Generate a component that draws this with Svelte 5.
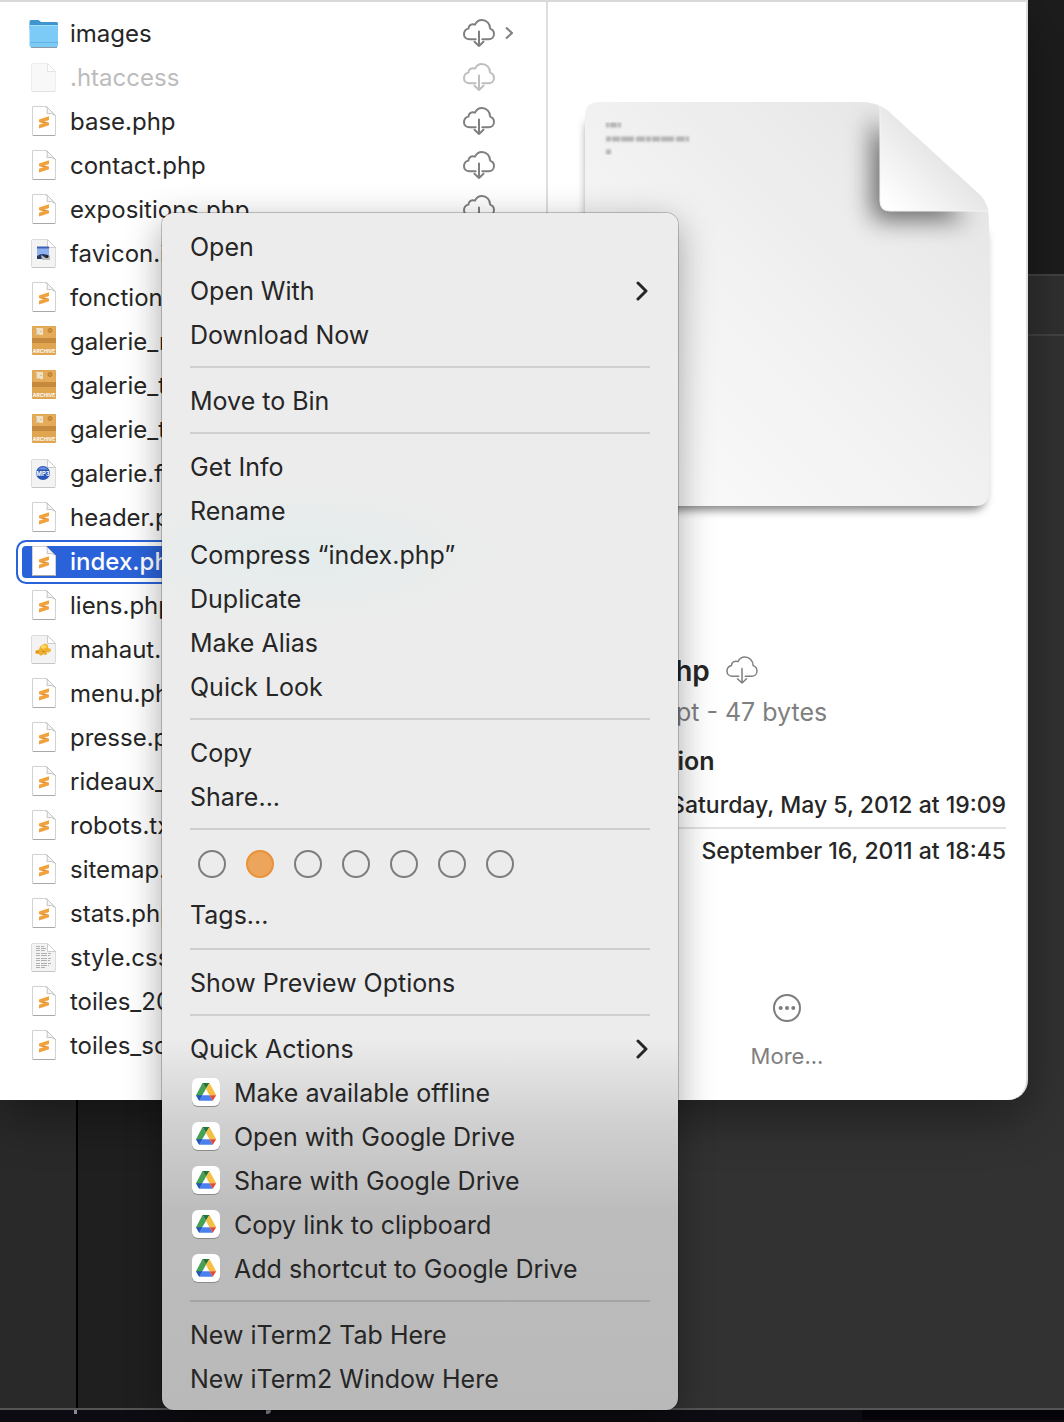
<script>
  const files = [
    { name: 'images', icon: 'folder', cloud: true, folder: true },
    { name: '.htaccess', icon: 'blank', cloud: true, dimmed: true },
    { name: 'base.php', icon: 'code', cloud: true },
    { name: 'contact.php', icon: 'code', cloud: true },
    { name: 'expositions.php', icon: 'code', cloud: true },
    { name: 'favicon.ico', icon: 'image' },
    { name: 'fonctions', icon: 'code' },
    { name: 'galerie_n', icon: 'archive' },
    { name: 'galerie_t', icon: 'archive' },
    { name: 'galerie_t', icon: 'archive' },
    { name: 'galerie.fl', icon: 'media' },
    { name: 'header.php', icon: 'code' },
    { name: 'index.php', icon: 'code' },
    { name: 'liens.php', icon: 'code' },
    { name: 'mahaut.', icon: 'duck' },
    { name: 'menu.php', icon: 'code' },
    { name: 'presse.php', icon: 'code' },
    { name: 'rideaux_', icon: 'code' },
    { name: 'robots.txt', icon: 'code' },
    { name: 'sitemap.', icon: 'code' },
    { name: 'stats.php', icon: 'code' },
    { name: 'style.css', icon: 'text' },
    { name: 'toiles_20', icon: 'code' },
    { name: 'toiles_so', icon: 'code' }
  ]

  const groups = [
    [{ label: 'Open' }, { label: 'Open With', sub: true }, { label: 'Download Now' }],
    [{ label: 'Move to Bin' }],
    [
      { label: 'Get Info' },
      { label: 'Rename' },
      { label: 'Compress “index.php”' },
      { label: 'Duplicate' },
      { label: 'Make Alias' },
      { label: 'Quick Look' }
    ],
    [{ label: 'Copy' }, { label: 'Share...' }],
    [{ tags: true }, { label: 'Tags...' }],
    [{ label: 'Show Preview Options' }],
    [
      { label: 'Quick Actions', sub: true },
      { label: 'Make available offline', drive: true },
      { label: 'Open with Google Drive', drive: true },
      { label: 'Share with Google Drive', drive: true },
      { label: 'Copy link to clipboard', drive: true },
      { label: 'Add shortcut to Google Drive', drive: true }
    ],
    [{ label: 'New iTerm2 Tab Here' }, { label: 'New iTerm2 Window Here' }]
  ]

  const tags = ['Red', 'Orange', 'Yellow', 'Green', 'Blue', 'Purple', 'Grey']

  let selected = $state('index.php')
  let activeTag = $state('Orange')
</script>

{#snippet cloud()}
  <svg class="cloud" viewBox="0 0 32 30" width="32" height="30" aria-hidden="true">
    <path d="M12.7 20.3H6.5C3.3 20.3 1 18 1 15.2c0-2.8 1.9-5 4.5-5.600C5.400 6.400 8.700 4.200 12 5.600 13.400 2.800 15.800 1 18.800 1c4.700 0 8.300 3.600 8.300 8.600 2.400.8 3.900 2.900 3.900 5.400 0 3-2.300 5.300-5.300 5.300h-6.400M16 12.500V27M11.500 22.800 16 27l4.500-4.200" />
  </svg>
{/snippet}

{#snippet fileIcon(kind)}
  <svg class="icon" viewBox="0 1 32 32" width="32" height="32" aria-hidden="true">
    {#if kind === 'folder'}
      <path d="M1.500 4.500q0-1.500 1.500-1.500h7.500l2.500 2h15.500q1.500 0 1.500 1.500v6h-28.500z" fill="#3f95cf" />
      <rect x="1.500" y="8" width="28.500" height="22" rx="1.500" fill="#7ccbf7" />
      <path d="M2 8.500h28" stroke="#a5dfff" />
      <path d="M2 25.500h28" stroke="#62b4e4" />
      <path d="M3 30.500h26" stroke="#8a9aa5" />
    {:else if kind === 'code'}
      <path d="M4.500 1.500h14l9 9v20h-23z" fill="#fff" stroke="#d2d2d2" />
      <path d="M5 30.500h22" stroke="#a8a8a8" />
      <path d="M18.500 1.500q1.500 3 .5 7 5-1 8.500 2z" fill="#f5f5f5" stroke="#c4c4c4" />
      <path d="M21 11.300V15l-5 1.700 5 1v2.600l-10 3.200v-3.700l5-1.700-5-1.200v-2.500z" fill="#f2a23c" />
      <path d="M11 16.900l5-.2 5 1-5 .4z" fill="#dd8a2c" />
    {:else if kind === 'archive'}
      <rect x="4" y="1" width="24" height="29" rx="1" fill="#dfa550" />
      <rect x="5" y="2" width="22" height="11" fill="#e5ab58" />
      <rect x="4" y="13" width="24" height="5" fill="#c58a3d" />
      <rect x="8" y="3" width="7" height="7" fill="#eee1c8" />
      <path d="M8.500 4v5.500h3M12 6.500h2" fill="none" stroke="#d3c197" />
      <circle cx="22" cy="5.500" r="2" fill="#cf9343" stroke="#b87a32" />
      <text x="16" y="27.500" text-anchor="middle">ARCHIVE</text>
    {:else}
      <path d="M4.500 2.500h15l8 8v19q0 1-1 1h-22q-1 0-1-1v-26q0-1 1-1z" fill="#f3f3f4" stroke="#dcdcdc" />
      <path d="M4 30.500h23" stroke="#c6c6c6" />
      <path d="M19.500 2.500v8h8z" fill="#fff" stroke="#cccccc" />
      {#if kind === 'image'}
        <rect x="9" y="10" width="12" height="9" fill="#8fb1ef" />
        <path d="M9 10.500h12" stroke="#3a60b5" stroke-width="2" />
        <path d="M9 19q6-4 12 0v3H9z" fill="#26365e" />
        <path d="M13 18l5 3 4-3v5h-8z" fill="#b9bdc2" />
        <circle cx="19" cy="19.500" r="1.500" fill="#222" />
      {:else if kind === 'media'}
        <circle cx="15" cy="16" r="7" fill="#2655b5" />
        <path d="M9.500 12.500q5.500-5 11 0z" fill="#6c93df" />
        <text class="mp3" x="15" y="18.500" text-anchor="middle">MP3</text>
      {:else if kind === 'duck'}
        <path d="M8 21c-2-3 1-5 3-4 0-3 2-5 5-6 3-1 5 2 4 4l3 1c0 3-2 4-4 3 1 3-2 4-4 2-1 2-3 2-4 0z" fill="#efb02f" />
        <path d="M13 13q4-3 6 1-2 3-6 1z" fill="#ffd75b" />
        <path d="M8 19h3M14 18l3 1" stroke="#cc7b21" />
      {:else if kind === 'text'}
        <path d="M8 5.500h8M8 7.500h10M8 9.500h9M8 12.500h15M8 14.500h14M8 17.500h15M8 19.500h14M8 22.500h15M8 24.500h13M8 26.500h9" stroke="#b0b0b0" stroke-dasharray="4 1 6 1 3 1" />
      {/if}
    {/if}
  </svg>
{/snippet}

{#snippet driveIcon()}
  <svg class="drive" viewBox="0 0 28 30" width="28" height="30" aria-hidden="true">
    <rect y="1" width="28" height="28" rx="6" fill="#8b8b8b" />
    <rect width="28" height="28" rx="6" fill="#fff" />
    <path d="M10.500 5 4 17.200 7.200 22.800 14 10.800z" fill="#46a154" />
    <path d="M10.500 5h7L14 10.800z" fill="#26743b" />
    <path d="M17.500 5 24.200 17.200h-6.800L14 10.800z" fill="#f4bf42" />
    <path d="M4 17.200h6.800L7.200 22.800z" fill="#2355c4" />
    <path d="M10.800 17.200h6.600l3.400 5.600H7.200z" fill="#4a80ee" />
    <path d="M17.400 17.200h6.800l-3.400 5.600z" fill="#e04a36" />
  </svg>
{/snippet}

<div class="desktop">
  <!-- windows behind the Finder -->
  <div class="backdrop">
    <div class="titlebar"></div>
    <div class="toolbar"></div>
    <div class="panes">
      <div class="pane-side"></div>
      <div class="pane-list"></div>
      <div class="pane-main"></div>
    </div>
    <div class="terminal"><span></span><i></i><b></b></div>
  </div>

  <main class="finder">
    <ul class="files">
      {#each files as file, i (i)}
        <li>
          <button
            class="file"
            class:dimmed={file.dimmed}
            class:selected={file.name === selected}
            onclick={() => (selected = file.name)}
          >
            {@render fileIcon(file.icon)}
            <span class="name">{file.name}</span>
            {#if file.cloud}
              {@render cloud()}
            {/if}
            <span class="arrow">
              {#if file.folder}
                <svg viewBox="0 0 8 16" width="8" height="16" aria-hidden="true">
                  <path d="M1 1.500 7 7l-6 5.500" />
                </svg>
              {/if}
            </span>
          </button>
        </li>
      {/each}
    </ul>

    <section class="preview">
      <svg class="paper" viewBox="5 0 430 440" width="430" height="440" aria-hidden="true">
        <defs>
          <linearGradient id="sheet" x1="0" y1="1" x2="1" y2="0">
            <stop offset="0" stop-color="#fcfcfc" />
            <stop offset="0.500" stop-color="#f1f1f1" />
            <stop offset="1" stop-color="#e3e3e3" />
          </linearGradient>
          <linearGradient id="fold" x1="0" y1="1" x2="0.600" y2="0.400">
            <stop offset="0.100" stop-color="#ffffff" />
            <stop offset="1" stop-color="#e2e2e2" />
          </linearGradient>
          <filter id="soft" x="-20%" y="-20%" width="140%" height="140%">
            <feGaussianBlur stdDeviation="5" />
          </filter>
          <filter id="softer" x="-80%" y="-80%" width="260%" height="260%">
            <feGaussianBlur stdDeviation="12" />
          </filter>
          <filter id="tiny">
            <feGaussianBlur stdDeviation="0.800" />
          </filter>
          <clipPath id="sheetClip">
            <path d="M32 18h262q16 0 27 9l92 84q9 9 9 25v272q0 14-14 14H32q-14 0-14-14V32q0-14 14-14z" />
          </clipPath>
        </defs>
        <path d="M34 34h250l134 116v262q0 14-14 14H32q-12 0-12-14V40z" fill="#000" opacity="0.500" filter="url(#soft)" />
        <g clip-path="url(#sheetClip)">
          <rect x="18" y="18" width="404" height="404" fill="url(#sheet)" />
          <path d="M305 34v92q0 10 10 10h85z" fill="#000" opacity="0.550" filter="url(#softer)" />
          <path d="M313 18v99q0 10 10 10h99V18z" fill="url(#fold)" />
          <path d="M313 20v97q0 10 10 10h97" fill="none" stroke="#f4f4f4" />
        </g>
        <g stroke="#b4b4b4" stroke-width="5" filter="url(#tiny)">
          <path d="M39 41h15" stroke-dasharray="3 1 7 1" />
          <path d="M39 55h83" stroke-dasharray="5 1 8 1 13 2 9 1" />
          <path d="M39 68h5" />
        </g>
      </svg>

      <h1>index.php {@render cloud()}</h1>
      <p class="kind">PHP script - 47 bytes</p>
      <h2>Information</h2>
      <p class="date">Saturday, May 5, 2012 at 19:09</p>
      <p class="date">September 16, 2011 at 18:45</p>

      <button class="more">
        <svg viewBox="0 0 28 28" width="28" height="28" aria-hidden="true">
          <circle cx="14" cy="14" r="13" fill="none" stroke="#7d7d7d" stroke-width="2" />
          <g fill="#7d7d7d">
            <circle cx="7.700" cy="14" r="2" />
            <circle cx="14" cy="14" r="2" />
            <circle cx="20.300" cy="14" r="2" />
          </g>
        </svg>
        More...
      </button>
    </section>
  </main>

  <div class="menu" role="menu">
    {#each groups as group, g (g)}
      {#if g > 0}
        <hr />
      {/if}
      {#each group as item, i (i)}
        {#if item.tags}
          <div class="tags">
            {#each tags as tag (tag)}
              <button
                class="tag"
                class:on={tag === activeTag}
                aria-label={tag}
                onclick={() => (activeTag = tag)}
              ></button>
            {/each}
          </div>
        {:else}
          <button class="item" role="menuitem">
            {#if item.drive}
              {@render driveIcon()}
            {/if}
            <span>{item.label}</span>
            {#if item.sub}
              <svg class="sub" viewBox="0 0 12 20" width="12" height="20" aria-hidden="true">
                <path d="M2 2l8 8-8 8" />
              </svg>
            {/if}
          </button>
        {/if}
      {/each}
    {/each}
  </div>
</div>

<style>
  :global(body) {
    margin: 0;
    background: #2f2f2f;
  }

  .desktop {
    display: grid;
    grid-template-columns: minmax(0, 1fr);
    min-height: 100vh;
    overflow: hidden;
    font-family: Inter, "Liberation Sans", sans-serif;
    color: #262626;
  }

  .backdrop,
  .finder,
  .menu {
    grid-area: 1 / 1;
  }

  button {
    padding: 0;
    border: 0;
    background: none;
    color: inherit;
    font: inherit;
    text-align: left;
  }

  /* Backdrop */
  .backdrop {
    display: flex;
    flex-direction: column;
    background: #303030;
  }

  .titlebar {
    height: 274px;
    background: #1d1d1d;
  }

  .toolbar {
    height: 58px;
    border-top: 2px solid #434343;
    border-bottom: 2px solid #434343;
  }

  .panes {
    display: flex;
    flex: 1;
    border-bottom: 2px solid #555;
  }

  .pane-side {
    width: 76px;
    border-right: 2px solid #000;
    background: #292929;
  }

  .pane-list {
    width: 300px;
    background: #1f1f1f;
  }

  .pane-main {
    flex: 1;
    background: #323232;
  }

  .terminal {
    display: flex;
    height: 12px;
    background: #0c0c12;
  }

  .terminal span {
    width: 3px;
    height: 4px;
    margin-left: 74px;
    background: #888b95;
  }

  .terminal i {
    width: 5px;
    height: 4px;
    margin-left: 189px;
    border-radius: 0 0 4px;
    background: #888b95;
  }

  .terminal b {
    width: 202px;
    height: 10px;
    margin-left: auto;
    background: #040409;
  }

  /* Finder window */
  .finder {
    display: flex;
    align-self: start;
    margin-right: 36px;
    box-sizing: border-box;
    border-top: 2px solid #d9d9d9;
    border-right: 2px solid #dcdddd;
    border-radius: 0 0 20px 0;
    background: #fff;
    box-shadow: 0 16px 50px rgba(0, 0, 0, 0.4);
  }

  .files {
    flex: 0 0 546px;
    margin: 0;
    padding: 10px 0 32px;
    border-right: 2px solid #dedede;
    list-style: none;
  }

  .file {
    display: flex;
    align-items: center;
    width: 514px;
    height: 44px;
    margin-left: 16px;
    padding-left: 12px;
    box-sizing: border-box;
    font-size: 24px;
    line-height: 30px;
  }

  .name {
    flex: 1;
    margin-left: 10px;
    white-space: nowrap;
  }

  .icon text {
    fill: #fff;
    font-size: 5px;
    font-weight: 700;
  }

  .icon .mp3 {
    font-size: 6px;
  }

  .cloud {
    flex: none;
    fill: none;
    stroke: #7f7f7f;
    stroke-width: 2;
    stroke-linecap: round;
    stroke-linejoin: round;
  }

  .arrow {
    display: flex;
    width: 25px;
    margin-left: 10px;
    fill: none;
    stroke: #7f7f7f;
    stroke-width: 2;
  }

  .dimmed .name {
    color: #bcbcbc;
  }

  .dimmed svg {
    opacity: 0.5;
  }

  .selected {
    border: 2px solid #2a63d9;
    border-radius: 10px;
    padding: 4px 4px 4px 10px;
    background: #2a63d9;
    box-shadow: inset 0 0 0 4px #fff;
    color: #fff;
    font-weight: 500;
  }

  /* Preview column */
  .preview {
    display: flex;
    flex: 1;
    flex-direction: column;
    min-width: 0;
    padding: 82px 20px 0;
  }

  .paper {
    flex: none;
    align-self: center;
  }

  h1,
  h2,
  p {
    margin: 0;
  }

  h1,
  h2,
  .kind {
    padding-left: 7px;
  }

  h1 {
    display: flex;
    align-items: center;
    gap: 16px;
    margin-top: 127px;
    font-size: 28px;
    font-weight: 600;
    line-height: 40px;
  }

  h1 .cloud {
    stroke-width: 1.5;
  }

  .kind {
    color: #7f7f7f;
    font-size: 25px;
    line-height: 42px;
  }

  h2 {
    margin-top: 6px;
    font-size: 25px;
    font-weight: 600;
    line-height: 44px;
  }

  .date {
    font-size: 23px;
    font-weight: 500;
    line-height: 44px;
    text-align: right;
    white-space: nowrap;
  }

  .date + .date {
    border-top: 2px solid #e2e2e2;
  }

  .more {
    display: flex;
    flex-direction: column;
    align-items: center;
    align-self: center;
    gap: 18px;
    margin-top: 121px;
    color: #7f7f7f;
    font-size: 22px;
    line-height: 32px;
  }

  /* Context menu */
  .menu {
    width: 516px;
    margin: 213px 0 12px 162px;
    padding: 12px 28px 9px;
    box-sizing: border-box;
    align-self: start;
    border-radius: 12px;
    background:
      radial-gradient(ellipse 200px 70px at 140px 342px, #e4ecec, rgba(236, 236, 236, 0)),
      linear-gradient(#ececec 826px, #d0d0d0 910px, #bcbcbc 1000px, #b9b9b9);
    box-shadow:
      0 0 0 1px rgba(0, 0, 0, 0.2),
      0 10px 36px rgba(0, 0, 0, 0.35);
  }

  .item {
    display: flex;
    align-items: center;
    width: 100%;
    height: 44px;
    font-size: 25px;
    line-height: 32px;
  }

  .drive {
    margin: 0 14px 0 2px;
  }

  .sub {
    margin-left: auto;
    margin-right: 2px;
    fill: none;
    stroke: #262626;
    stroke-width: 3;
    stroke-linecap: round;
    stroke-linejoin: round;
  }

  hr {
    height: 2px;
    margin: 9px 0 11px;
    border: 0;
    background: rgba(0, 0, 0, 0.12);
  }

  .tags {
    display: flex;
    gap: 20px;
    padding: 9px 8px 15px;
  }

  .tags + .item {
    margin-bottom: 11px;
  }

  .tag {
    width: 28px;
    height: 28px;
    box-sizing: border-box;
    border: 2px solid #7d7d7d;
    border-radius: 50%;
  }

  .tag.on {
    border-color: #e8923a;
    background: #eda55c;
  }
</style>
